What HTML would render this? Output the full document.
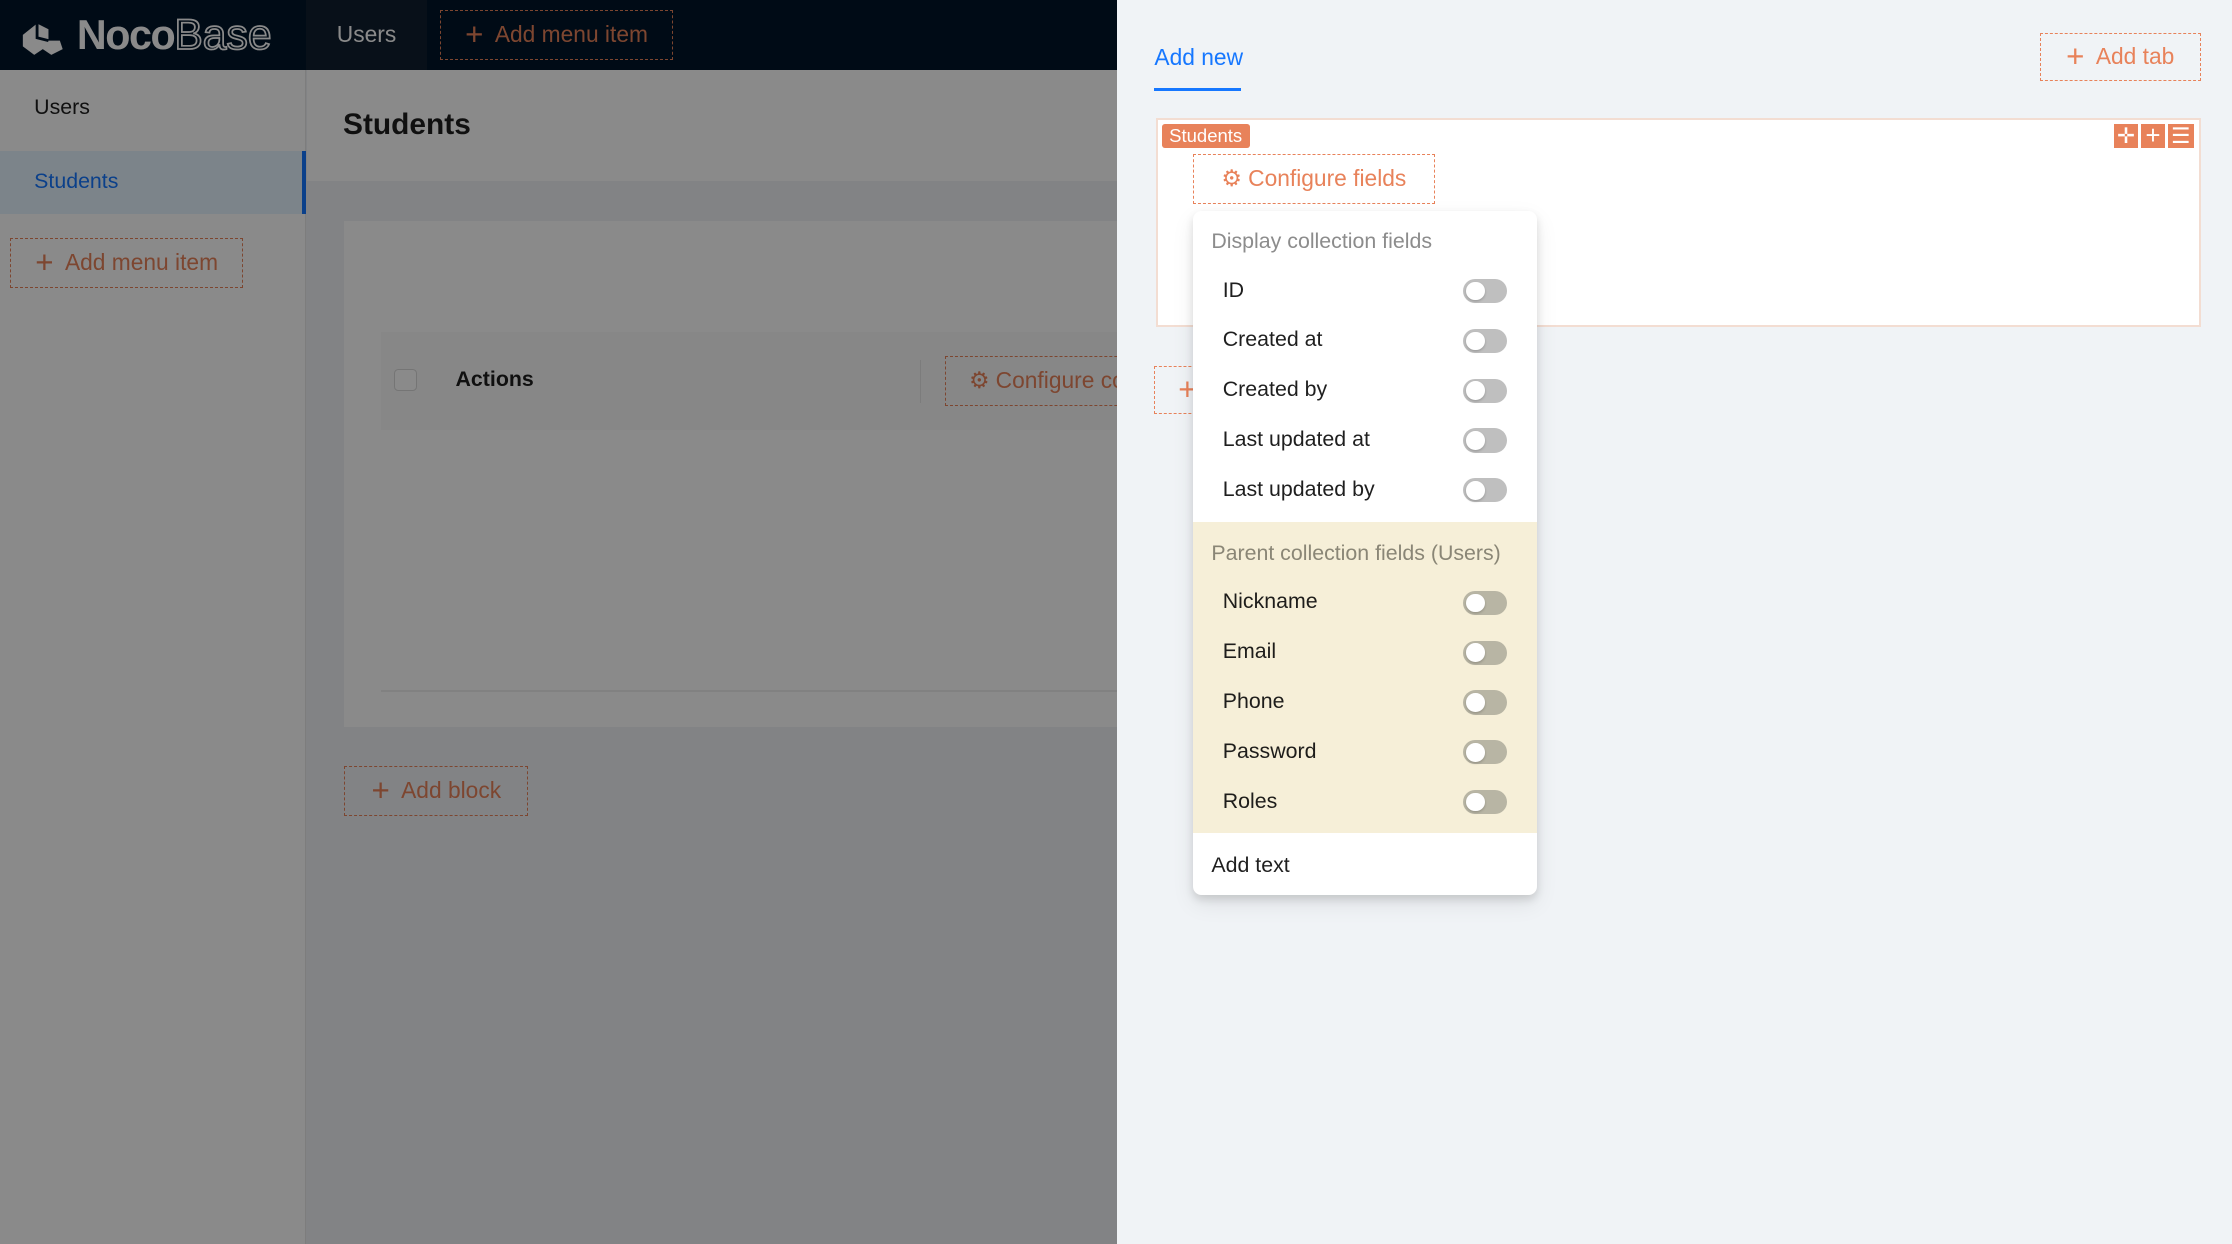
<!DOCTYPE html>
<html><head><meta charset="utf-8"><style>
html,body{margin:0;padding:0;width:2232px;height:1244px;overflow:hidden;background:#f0f2f5}
#w{position:relative;width:1568px;height:874px;zoom:1.42347;font-family:"Liberation Sans",sans-serif;color:rgba(0,0,0,.88);font-size:15px}
.a{position:absolute;box-sizing:border-box}
.dash{border:1px dashed #e8825a;color:#e8825a;display:flex;align-items:center;justify-content:center;gap:8px;font-size:16px;white-space:nowrap}
.pl{font-size:22px;font-weight:300;line-height:1}
.tg{position:absolute;left:190px;width:31px;height:17px;border-radius:9px;background:#bfbfbf}
.tg:after{content:"";position:absolute;left:2px;top:2px;width:13px;height:13px;border-radius:50%;background:#fff;box-shadow:0 1px 2px rgba(0,0,0,.2)}
.it{position:absolute;left:21px;font-size:15px}
</style></head><body><div id="w">
<!-- header -->
<div class="a" style="left:0;top:0;width:1568px;height:49px;background:#001529"></div>
<div class="a" style="left:14px;top:8px;display:flex;align-items:center;gap:8px;color:#fff">
<svg width="32" height="30" viewBox="0 0 32 30"><path d="M2 14 L12 6 L20 10 L20 18 L28 18 L30 24 L22 28 L16 24 L10 28 L2 22Z" fill="#fff"/><path d="M12 6 L12 16 L20 18" stroke="#001529" stroke-width="2" fill="none"/></svg>
<span style="font-size:29px;font-weight:bold;letter-spacing:-1px">Noco</span><span style="font-size:30px;font-weight:normal;margin-left:-8px;color:transparent;-webkit-text-stroke:1.2px #fff">Base</span></div>
<div class="a" style="left:215px;top:0;width:85px;height:49px;background:#0f1e2f;color:#fff;display:flex;align-items:center;justify-content:center;font-size:16px">Users</div>
<div class="a dash" style="left:309px;top:7px;width:164px;height:35px"><span class="pl">+</span>Add menu item</div>
<!-- sidebar -->
<div class="a" style="left:0;top:49px;width:215px;height:825px;background:#fff;border-right:1px solid #e8e8e8"></div>
<div class="a" style="left:24px;top:67px;font-size:15px">Users</div>
<div class="a" style="left:0;top:106px;width:215px;height:44px;background:#e6f4ff;border-right:3px solid #1677ff"></div>
<div class="a" style="left:24px;top:119px;font-size:15px;color:#1677ff">Students</div>
<div class="a dash" style="left:7px;top:167px;width:164px;height:35px"><span class="pl">+</span>Add menu item</div>
<!-- main -->
<div class="a" style="left:216px;top:49px;width:569px;height:825px;overflow:hidden">
<div class="a" style="left:0;top:0;width:569px;height:78px;background:#fff"></div>
<div class="a" style="left:25px;top:27px;font-size:21px;font-weight:bold">Students</div>
<div class="a" style="left:26px;top:106px;width:544px;height:356px;background:#fff"></div>
<div class="a" style="left:52px;top:184px;width:518px;height:69px;background:#fafafa"></div>
<div class="a" style="left:61px;top:210px;width:16px;height:16px;border:1px solid #d9d9d9;border-radius:3px;background:#fff"></div>
<div class="a" style="left:104px;top:209px;font-size:15px;font-weight:bold">Actions</div>
<div class="a" style="left:430px;top:204px;width:1px;height:30px;background:#e5e5e5"></div>
<div class="a dash" style="left:448px;top:201px;width:170px;height:35px;justify-content:flex-start;padding-left:16px">⚙ Configure columns</div>
<div class="a" style="left:52px;top:436px;width:518px;height:1px;background:#eee"></div>
<div class="a dash" style="left:26px;top:489px;width:129px;height:35px"><span class="pl">+</span>Add block</div>
</div>
<!-- overlay -->
<div class="a" style="left:0;top:0;width:785px;height:874px;background:rgba(0,0,0,.46)"></div>
<!-- drawer -->
<div class="a" style="left:785px;top:0;width:783px;height:874px;background:#f0f3f6"></div>
<div class="a" style="left:811px;top:31px;font-size:16px;color:#1677ff">Add new</div>
<div class="a" style="left:811px;top:62px;width:61px;height:2px;background:#1677ff"></div>
<div class="a dash" style="left:1433px;top:23px;width:113px;height:34px;background:transparent"><span class="pl">+</span>Add tab</div>
<div class="a" style="left:812px;top:83px;width:734px;height:147px;background:#fff;border:2px solid #f3ddd2"></div>
<div class="a" style="left:816px;top:87px;width:62px;height:17px;background:#e8825a;color:#fff;font-size:13px;line-height:17px;text-align:center;border-radius:2px">Students</div>
<div class="a" style="left:1485px;top:87px;width:17px;height:17px;background:#e8825a;color:#fff;font-size:15px;line-height:17px;text-align:center">✛</div>
<div class="a" style="left:1504px;top:87px;width:17px;height:17px;background:#e8825a;color:#fff;font-size:18px;line-height:17px;text-align:center">+</div>
<div class="a" style="left:1523px;top:87px;width:18px;height:17px;background:#e8825a;color:#fff;font-size:15px;line-height:17px;text-align:center">☰</div>
<div class="a dash" style="left:838px;top:108px;width:170px;height:35px;background:#fff">⚙ Configure fields</div>
<div class="a" style="left:838px;top:170px;width:1px;height:32px;border-left:1px dashed #e8825a"></div>
<div class="a dash" style="left:811px;top:257px;width:40px;height:34px;justify-content:flex-start;padding-left:16px"><span class="pl">+</span></div>
<!-- dropdown -->
<div class="a" style="left:838px;top:148px;width:242px;height:481px;background:#fff;border-radius:6px;box-shadow:0 6px 16px rgba(0,0,0,.08),0 3px 6px rgba(0,0,0,.12)">
<div class="a" style="left:13px;top:13px;color:#8c8c8c;font-size:15px">Display collection fields</div>
<div class="it" style="top:47px">ID</div><div class="tg" style="top:48px"></div>
<div class="it" style="top:82px">Created at</div><div class="tg" style="top:83px"></div>
<div class="it" style="top:117px">Created by</div><div class="tg" style="top:118px"></div>
<div class="it" style="top:152px">Last updated at</div><div class="tg" style="top:153px"></div>
<div class="it" style="top:187px">Last updated by</div><div class="tg" style="top:188px"></div>
<div class="a" style="left:0;top:219px;width:242px;height:218px;background:#f6efd8">
<div class="a" style="left:13px;top:13px;color:#8a8676;font-size:15px">Parent collection fields (Users)</div>
<div class="it" style="top:47px">Nickname</div><div class="tg" style="top:48px;background:#b8b5a4"></div>
<div class="it" style="top:82px">Email</div><div class="tg" style="top:83px;background:#b8b5a4"></div>
<div class="it" style="top:117px">Phone</div><div class="tg" style="top:118px;background:#b8b5a4"></div>
<div class="it" style="top:152px">Password</div><div class="tg" style="top:153px;background:#b8b5a4"></div>
<div class="it" style="top:187px">Roles</div><div class="tg" style="top:188px;background:#b8b5a4"></div>
</div>
<div class="a" style="left:13px;top:451px;font-size:15px">Add text</div>
</div>
</div></body></html>
